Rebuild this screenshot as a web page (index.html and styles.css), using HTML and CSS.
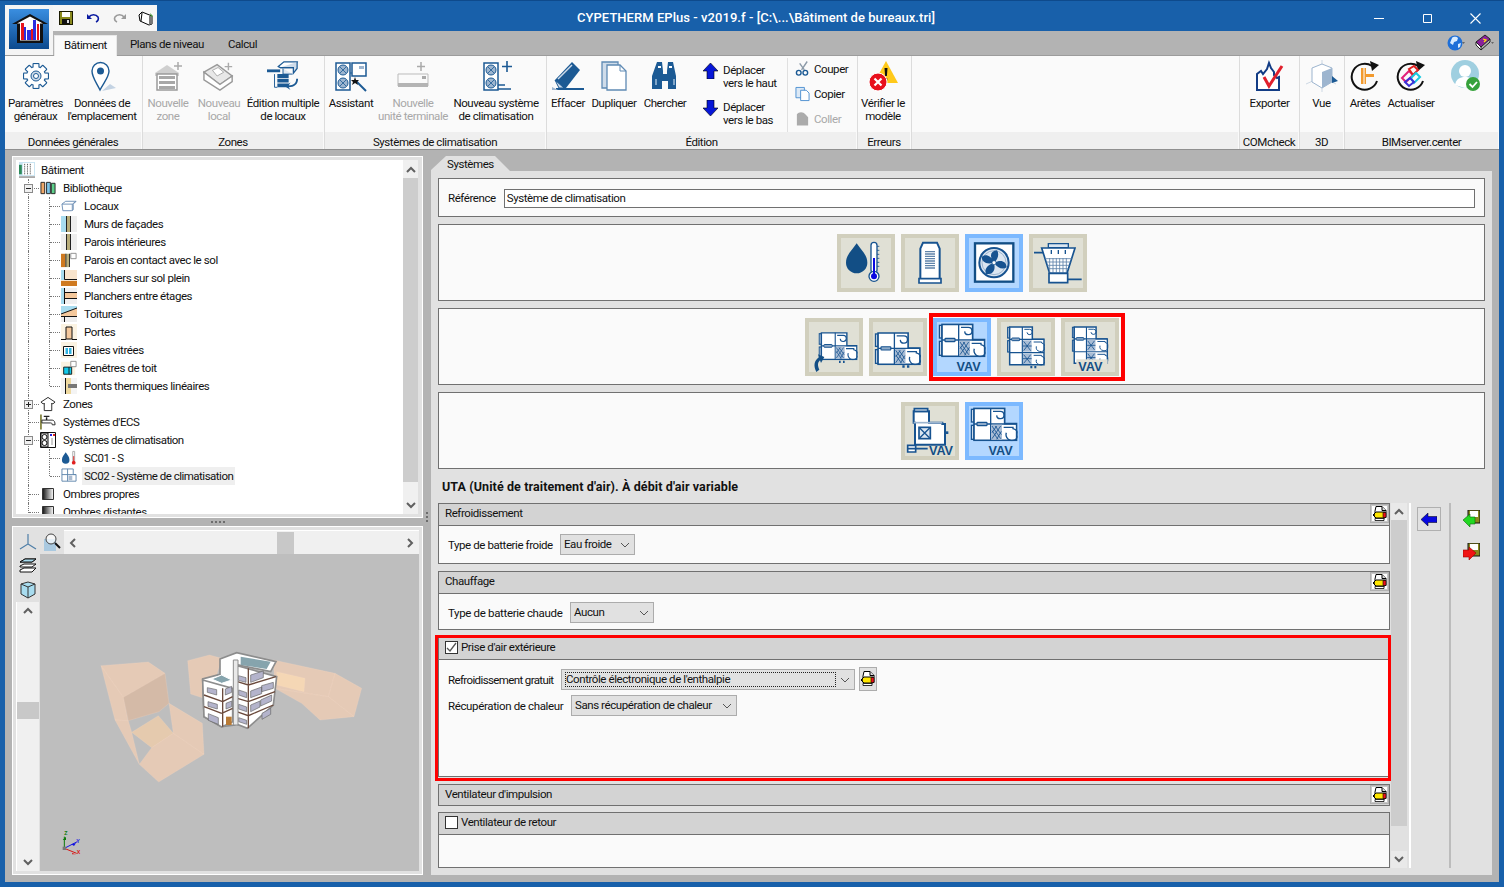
FILE: index.html
```html
<!DOCTYPE html>
<html lang="fr">
<head>
<meta charset="utf-8">
<title>CYPETHERM EPlus</title>
<link rel="stylesheet" href="styles.css">
</head>
<body>
<svg class="defs" width="0" height="0" aria-hidden="true">
  <symbol id="disk" viewBox="0 0 14 14"><path d="M0 0h14v14H0z" fill="#1a1a00"/><path d="M1 1h12v12H1z" fill="#8a8a1e"/><path d="M3 1h8v5H3z" fill="#fff"/><path d="M3 8h8v5H3z" fill="#111"/><path d="M8 9h2v3H8z" fill="#ddd"/></symbol>
  <symbol id="pencil" viewBox="0 0 16 16"><path d="M4 .5h6l4 4v7H3V5z" fill="#fff" stroke="#000"/><path d="M10 .5v4h4" fill="#ddd" stroke="#000"/><path d="M1 9l3-3h9v6H4z" fill="#ffe600" stroke="#000"/><path d="M11 6.500h3v5h-3z" fill="#e8141c" stroke="#000" stroke-width=".6"/><path d="M3 12.500h9v2H3z" fill="#fff" stroke="#000" stroke-width=".8"/><path d="M1 9l2-1v2z" fill="#000"/></symbol>
  <symbol id="chev" viewBox="0 0 10 6"><path d="M1 1l4 4 4-4" fill="none" stroke="#555" stroke-width="1"/></symbol>
  <symbol id="sb-up" viewBox="0 0 10 7"><path d="M1 6l4-4 4 4" fill="none" stroke="#606060" stroke-width="2"/></symbol>
  <symbol id="sb-down" viewBox="0 0 10 7"><path d="M1 1l4 4 4-4" fill="none" stroke="#606060" stroke-width="2"/></symbol>
  <symbol id="sb-left" viewBox="0 0 7 10"><path d="M6 1L2 5l4 4" fill="none" stroke="#606060" stroke-width="2"/></symbol>
  <symbol id="sb-right" viewBox="0 0 7 10"><path d="M1 1l4 4-4 4" fill="none" stroke="#606060" stroke-width="2"/></symbol>

  <symbol id="ahu" viewBox="0 0 142 102">
    <g fill="#fff" stroke="#175390" stroke-width="5">
      <rect x="3" y="6" width="8" height="38" fill="#cfdcea" stroke-width="4"/>
      <rect x="3" y="54" width="8" height="42" fill="#cfdcea" stroke-width="4"/>
      <path d="M11 3h92v46h36v50H11z"/>
      <path d="M61 3v96M11 50h128" stroke-width="4"/>
      <rect x="20" y="45" width="30" height="10" rx="2" fill="#8fabc9" stroke-width="3.500"/>
      <path d="M68 12h22a11 11 0 1 1-11 12" fill="none" stroke-width="4"/>
      <rect x="63" y="52" width="32" height="45" fill="#a9bdd5" stroke="none"/>
      <path d="M65 56l26 38M65 70l18 26M75 56l18 26M91 56L65 94M79 56L65 76M93 72L79 96" stroke="#175390" stroke-width="2.500" fill="none"/>
      <path d="M100 60h28v4a18 18 0 1 1-20 12" fill="none" stroke-width="4"/>
    </g>
  </symbol>
  <symbol id="ahu3" viewBox="0 0 114 120">
    <g fill="#fff" stroke="#175390" stroke-width="4.500">
      <rect x="2" y="4" width="6" height="32" fill="#cfdcea" stroke-width="3.500"/>
      <rect x="2" y="44" width="6" height="34" fill="#cfdcea" stroke-width="3.500"/>
      <path d="M8 3h68v37h35v76H8z"/>
      <path d="M46 3v113M8 40h103M8 80h103" stroke-width="3.500"/>
      <rect x="14" y="36" width="24" height="8" rx="2" fill="#8fabc9" stroke-width="3"/>
      <path d="M52 10h16a8 8 0 1 1-8 9" fill="none" stroke-width="3"/>
      <rect x="48" y="43" width="26" height="34" fill="#a9bdd5" stroke="none"/>
      <path d="M50 46l21 28M71 46L50 74M48 60h26" stroke-width="2.500" fill="none"/>
      <path d="M80 48h24v3a13 13 0 1 1-16 10" fill="none" stroke-width="3"/>
      <rect x="48" y="83" width="26" height="31" fill="#a9bdd5" stroke="none"/>
      <path d="M50 86l21 26M71 86L50 112M48 98h26" stroke-width="2.500" fill="none"/>
      <path d="M80 88h24v3a13 13 0 1 1-16 10" fill="none" stroke-width="3"/>
    </g>
  </symbol>
</svg>

<div class="window">
  <button class="app" aria-label="Application">
    <svg class="app-logo" viewBox="0 0 40 40">
      <defs><linearGradient id="lg" x1="0" y1="0" x2="0" y2="1"><stop offset="0" stop-color="#3a8ee0"/><stop offset="1" stop-color="#0c4a8e"/></linearGradient></defs>
      <rect width="40" height="40" fill="url(#lg)"/>
      <path d="M21 5L3 15h5v19h26V15h5z" fill="#111"/>
      <path d="M21 7.500L8 14.500h3v17h20v-17h3z" fill="#fff"/>
      <path d="M12 14h3v17h-3zM22 20h2v11h-2zM28 15h2v16h-2z" fill="#e8141c"/>
      <path d="M15 18h2v13h-2zM18 21h4v10h-4zM24 11h3v20h-3z" fill="#2d2de0"/>
    </svg>
  </button>

  <header class="titlebar">
    <div class="qat">
      <svg class="qi"><use href="#disk"/></svg>
      <svg class="qi" viewBox="0 0 14 14"><path d="M3 6c2-3 7-3 9 0 1 2 0 4-2 5" fill="none" stroke="#0a1aa0" stroke-width="1.600"/><path d="M1 3v5h5z" fill="#0a1aa0"/></svg>
      <svg class="qi" viewBox="0 0 14 14"><path d="M11 6C9 3 4 3 2 6c-1 2 0 4 2 5" fill="none" stroke="#9a9a9a" stroke-width="1.600"/><path d="M13 3v5H8z" fill="#9a9a9a"/></svg>
      <svg class="qi qi-cam" viewBox="0 0 17 15"><path d="M1 4l3-3 10 4v8l-3 1-9-4z" fill="#fff" stroke="#000"/><path d="M11 5l3 0 0 8-3 1z" fill="#777"/><path d="M12 2l3 3-2 1z" fill="#4a9a3a"/><path d="M4 2l-1 8" stroke="#000"/></svg>
    </div>
    <div class="title">CYPETHERM EPlus - v2019.f - [C:\...\Bâtiment de bureaux.tri]</div>
    <div class="winctl">
      <span class="wbtn"><svg width="11" height="11" viewBox="0 0 11 11"><path d="M0 5.500h10" stroke="#fff"/></svg></span>
      <span class="wbtn"><svg width="11" height="11" viewBox="0 0 11 11"><path d="M1.500 1.500h8v8h-8z" fill="none" stroke="#fff"/></svg></span>
      <span class="wbtn"><svg width="11" height="11" viewBox="0 0 11 11"><path d="M.5.500l10 10M10.500.500l-10 10" stroke="#fff" stroke-width="1.100"/></svg></span>
    </div>
  </header>

  <nav class="tabsbar">
    <span class="rtab rtab-on">Bâtiment</span>
    <span class="rtab rtab-plans">Plans de niveau</span>
    <span class="rtab rtab-calc">Calcul</span>
    <span class="tabs-right">
      <svg class="ti" viewBox="0 0 18 18"><circle cx="8" cy="9" r="7.500" fill="#1e6fd8"/><path d="M5 4c2-2 5-1 6 0l-1 3-3 1-1 3-3-2zM11 10l3-1-1 4-2 1z" fill="#d9ecff"/><path d="M15 8h3l-1.500 2z" fill="#666"/></svg>
      <svg class="ti ti-book" viewBox="0 0 19 18"><path d="M1 8l9-7 5 4-9 8z" fill="#8a1f9a" stroke="#222"/><path d="M1 8l5 5v3L1 11z" fill="#fff" stroke="#222"/><path d="M6 16l9-8V5" fill="none" stroke="#222"/><path d="M8 5l3 1-2 2" fill="none" stroke="#ffe600" stroke-width="1.300"/><path d="M16 8h3l-1.500 2z" fill="#666"/></svg>
    </span>
  </nav>

  <section class="ribbon">
    <div class="grp g1">
      <div class="gbody">
        <div class="rb b61"><svg class="ri" viewBox="-16 -16 32 32"><g fill="#1c5a94"><rect x="-3.500" y="-13" width="7" height="26" rx="1"/><rect x="-3.500" y="-13" width="7" height="26" rx="1" transform="rotate(45)"/><rect x="-3.500" y="-13" width="7" height="26" rx="1" transform="rotate(90)"/><rect x="-3.500" y="-13" width="7" height="26" rx="1" transform="rotate(135)"/><circle r="10"/></g><g fill="#fff"><rect x="-2.400" y="-11.900" width="4.800" height="23.800"/><rect x="-2.400" y="-11.900" width="4.800" height="23.800" transform="rotate(45)"/><rect x="-2.400" y="-11.900" width="4.800" height="23.800" transform="rotate(90)"/><rect x="-2.400" y="-11.900" width="4.800" height="23.800" transform="rotate(135)"/><circle r="8.900"/></g><circle r="5" fill="#cfdcea" stroke="#1c5a94"/><circle r="2.500" fill="#fff" stroke="#1c5a94"/></svg><span class="lb">Paramètres<br>généraux</span></div>
        <div class="rb b72"><svg class="ri" viewBox="0 0 32 32"><path d="M16 31l14-3-6-4z" fill="#c4d3e3"/><path d="M14 30C10 22 6 17 6 11a8.500 8.500 0 0 1 17 0c0 6-5 11-9 19z" fill="#fff" stroke="#1c5a94" stroke-width="1.400"/><circle cx="14.500" cy="11" r="3.500" fill="#1c5a94"/></svg><span class="lb">Données de<br>l'emplacement</span></div>
      </div>
      <div class="gfoot">Données générales</div>
    </div>
    <div class="grp g2">
      <div class="gbody">
        <div class="rb b50 off"><svg class="ri" viewBox="0 0 32 32"><path d="M26 2v8M22 6h8" stroke="#aaa" stroke-width="1.500"/><path d="M3 13L15 5l12 8v3H3z" fill="#cfcfcf"/><path d="M5 14h20v16H5z" fill="#fff" stroke="#9a9a9a" stroke-width="1.500"/><path d="M7 16h16v3H7zM7 21h16v3H7zM7 26h16v3H7z" fill="#a8a8a8"/></svg><span class="lb">Nouvelle<br>zone</span></div>
        <div class="rb b52 off"><svg class="ri" viewBox="0 0 34 32"><path d="M27 2v8M23 6h8" stroke="#aaa" stroke-width="1.500"/><path d="M1 12L15 4l16 12-13 9z" fill="#e8e8e8" stroke="#999" stroke-width="1.500"/><path d="M1 12v8l17 11 13-9v-6l-13 9z" fill="#fff" stroke="#999" stroke-width="1.500"/><path d="M10 10l6-3 6 5-7 4z" fill="#fff" stroke="#aaa"/></svg><span class="lb">Nouveau<br>local</span></div>
        <div class="rb b76"><svg class="ri" viewBox="0 0 34 32"><path d="M12 6l6-5h14l-4 6H14z" fill="#fff" stroke="#1c5a94" stroke-width="1.300"/><path d="M14 7h14v6l4-5V1" fill="#cfdcea" stroke="#1c5a94" stroke-width="1.300"/><path d="M17 8v6h10" fill="#dfe8f1" stroke="#1c5a94"/><path d="M0 9h14v3H0z" fill="#1c5a94"/><path d="M8 14v14h3" fill="none" stroke="#1c5a94"/><path d="M11 14h12v4H11zM11 19h12v4H11zM11 24h12v4H11z" fill="#1c5a94"/><path d="M31 19c0 5-3 7-8 7l2-3-6 4 6 4-2-3c6 0 10-3 10-9z" fill="#1c5a94"/></svg><span class="lb">Édition multiple<br>de locaux</span></div>
      </div>
      <div class="gfoot">Zones</div>
    </div>
    <div class="grp g3">
      <div class="gbody">
        <div class="rb b52"><svg class="ri" viewBox="0 0 32 32"><path d="M1 3h14v27H1z" fill="#fff" stroke="#1c5a94" stroke-width="1.500"/><circle cx="8" cy="10" r="5" fill="#9db5cf" stroke="#1c5a94"/><circle cx="8" cy="23" r="5" fill="#9db5cf" stroke="#1c5a94"/><path d="M5 7l6 6M11 7l-6 6M5 20l6 6M11 20l-6 6" stroke="#1c5a94" stroke-width=".8"/><path d="M17 3h14v13H17z" fill="#fff" stroke="#1c5a94" stroke-width="1.500"/><path d="M24 6h5v3h-5z" fill="#9db5cf"/><path d="M15 13h2" stroke="#1c5a94"/><path d="M21 21l10 10" stroke="#1c5a94" stroke-width="2"/><path d="M20 17l1 3 3 0-2 2 1 3-3-2-3 2 1-3-2-2 3 0z" fill="#111"/></svg><span class="lb">Assistant</span></div>
        <div class="rb b72 off"><svg class="ri ri-w" viewBox="0 0 32 32"><path d="M24 2v9M20 6.500h8" stroke="#aaa" stroke-width="1.500"/><path d="M1 14h30v12H1z" fill="#fafafa" stroke="#bbb"/><path d="M1 23h30v4H1z" fill="#b4b4b4"/><path d="M25 16h4v3h-4z" fill="#aaa"/></svg><span class="lb">Nouvelle<br>unité terminale</span></div>
        <div class="rb b94"><svg class="ri" viewBox="0 0 32 32"><path d="M4 3h14v27H4z" fill="#fff" stroke="#1c5a94" stroke-width="1.500"/><circle cx="11" cy="10" r="5" fill="#9db5cf" stroke="#1c5a94"/><circle cx="11" cy="23" r="5" fill="#9db5cf" stroke="#1c5a94"/><path d="M8 7l6 6M14 7l-6 6M8 20l6 6M14 20l-6 6" stroke="#1c5a94" stroke-width=".8"/><path d="M27 1v11M22 6.500h11" stroke="#1c5a94" stroke-width="1.600"/><path d="M18 25h7M18 29h13" stroke="#1c5a94" stroke-width="1.600"/></svg><span class="lb">Nouveau système<br>de climatisation</span></div>
      </div>
      <div class="gfoot">Systèmes de climatisation</div>
    </div>
    <div class="grp g4">
      <div class="gbody">
        <div class="rb b42"><svg class="ri" viewBox="0 0 32 32"><path d="M4 28h28v2H4z" fill="#1c5a94"/><path d="M3 20L20 2l8 8-14 18H8z" fill="#1c5a94"/><path d="M3 20l9 8H7z" fill="#cfdcea" stroke="#1c5a94"/><path d="M6 19L20 5" stroke="#cfdcea" stroke-width="1.500"/><path d="M0 27l6 3H0z" fill="#9db5cf"/></svg><span class="lb">Effacer</span></div>
        <div class="rb b50"><svg class="ri" viewBox="0 0 30 32"><path d="M3 2h16v26H3z" fill="#cfdcea" stroke="#5f8ab4" stroke-width="1.300"/><path d="M8 5h13l6 6v19H8z" fill="#fff" stroke="#5f8ab4" stroke-width="1.300"/><path d="M21 5v6h6" fill="none" stroke="#5f8ab4"/></svg><span class="lb">Dupliquer</span></div>
        <div class="rb b52"><svg class="ri" viewBox="0 0 32 32"><path d="M8 2h5l1 9v3h4v-3l1-9h5l3 14v13H19v-8h-6v8H3V16z" fill="#1c5a94"/><path d="M9 7h3M20 7h3" stroke="#fff" stroke-width="2"/><path d="M7 19v6M25 19v6" stroke="#7fa5c9" stroke-width="2"/></svg><span class="lb">Chercher</span></div>
        <div class="move">
          <div class="mv"><svg class="ms" viewBox="0 0 15 16"><path d="M7.500 0L15 8h-4v8H4V8H0z" fill="#0616d8" stroke="#000" stroke-width=".6"/></svg><span class="lb">Déplacer<br>vers le haut</span></div>
          <div class="mv"><svg class="ms" viewBox="0 0 15 16"><path d="M7.500 16L15 8h-4V0H4v8H0z" fill="#0616d8" stroke="#000" stroke-width=".6"/></svg><span class="lb">Déplacer<br>vers le bas</span></div>
        </div>
        <div class="clip">
          <div class="cl"><svg class="cs" viewBox="0 0 16 16"><path d="M13 0L7 9M5 2l5 7" stroke="#8c9aa8" stroke-width="1.500"/><circle cx="4" cy="12" r="2.500" fill="none" stroke="#1c5a94" stroke-width="1.500"/><circle cx="11" cy="12" r="2.500" fill="none" stroke="#1c5a94" stroke-width="1.500"/></svg>Couper</div>
          <div class="cl"><svg class="cs" viewBox="0 0 16 16"><path d="M1 1h9v11H1z" fill="#dce9f6" stroke="#4d8fd0"/><path d="M6 4h6l3 3v8H6z" fill="#fff" stroke="#4d8fd0"/></svg>Copier</div>
          <div class="cl off"><svg class="cs" viewBox="0 0 16 16"><path d="M2 3c2-3 7-3 9 0l3 3v9H2z" fill="#ababab"/></svg>Coller</div>
        </div>
      </div>
      <div class="gfoot">Édition</div>
    </div>
    <div class="grp g5">
      <div class="gbody">
        <div class="rb b50"><svg class="ri" viewBox="0 0 32 32"><path d="M19 1l12 22H7z" fill="#ffc91a"/><path d="M17.500 8h3l-.6 8h-1.800zM17.800 18h2.400v2.500h-2.400z" fill="#111"/><circle cx="11" cy="22" r="9" fill="#e8101c" stroke="#fff"/><path d="M7.500 18.500l7 7M14.500 18.500l-7 7" stroke="#fff" stroke-width="2.200"/></svg><span class="lb">Vérifier le<br>modèle</span></div>
      </div>
      <div class="gfoot">Erreurs</div>
    </div>
    <div class="grp g6"><div class="gbody"></div><div class="gfoot"></div></div>
    <div class="grp g7">
      <div class="gbody">
        <div class="rb b60"><svg class="ri" viewBox="0 0 32 32"><path d="M3 30V14l4-3 2 3 4-5 2-6 2 5 3 4v3l3 3 2-1v13z" fill="#fff" stroke="#123c85" stroke-width="2"/><path d="M10 17l5 9 13-20" fill="none" stroke="#e0202c" stroke-width="3"/></svg><span class="lb">Exporter</span></div>
      </div>
      <div class="gfoot">COMcheck</div>
    </div>
    <div class="grp g8">
      <div class="gbody">
        <div class="rb b43"><svg class="ri" viewBox="0 0 32 32"><path d="M16 0v8M0 24l9-4M30 24l-8-4M16 28v4" stroke="#cdd8e4"/><path d="M6 8l10-4 10 4v14l-10 6-10-6z" fill="#fff" stroke="#9db5cf"/><path d="M16 12l10-4v14l-10 6z" fill="#9db5cf"/><path d="M26 16l6 5-6 2z" fill="#1c5a94"/></svg><span class="lb">Vue</span></div>
      </div>
      <div class="gfoot">3D</div>
    </div>
    <div class="grp g9">
      <div class="gbody">
        <div class="rb b40"><svg class="ri" viewBox="0 0 32 32"><path d="M23 6a13 13 0 1 0 5 15" fill="none" stroke="#111" stroke-width="2"/><path d="M21 1l9 4-7 6z" fill="#111"/><path d="M12 8h5v6h8v3h-8v7h-5z" fill="#f29a2e"/><path d="M15 8v16" stroke="#fff"/></svg><span class="lb">Arêtes</span></div>
        <div class="rb b52"><svg class="ri" viewBox="0 0 32 32"><path d="M23 6a13 13 0 1 0 5 15" fill="none" stroke="#111" stroke-width="2"/><path d="M21 1l9 4-7 6z" fill="#111"/><path d="M7 18l7-7 4 4-7 7z" fill="none" stroke="#e0207a" stroke-width="2"/><path d="M14 9l5-3 4 4-5 5z" fill="none" stroke="#e02020" stroke-width="2"/><path d="M16 18l5-5 4 4-6 6z" fill="none" stroke="#18c8e0" stroke-width="2"/><path d="M10 22l5-4 4 4-5 4z" fill="none" stroke="#3a30d8" stroke-width="2"/></svg><span class="lb">Actualiser</span></div>
        <div class="rb b58"><svg class="ri" viewBox="0 0 32 32"><circle cx="15" cy="14" r="14" fill="#9fcfe0"/><circle cx="15" cy="11" r="6" fill="#fff"/><path d="M5 25c1-6 5-8 10-8s9 2 10 8l-10 3z" fill="#fff"/><circle cx="23" cy="24" r="7" fill="#37a23c"/><path d="M19.500 24l3 3 4.500-5" fill="none" stroke="#fff" stroke-width="1.800"/></svg></div>
      </div>
      <div class="gfoot">BIMserver.center</div>
    </div>
  </section>

  <main class="workspace">
    <aside class="leftcol">
      <div class="tree">
        <div class="tree-list">
          <div class="row r0"><svg class="ti16" viewBox="0 0 17 17"><rect width="17" height="15" fill="#c8e4f2"/><path d="M0 15h17v2H0z" fill="#aaa"/><path d="M0 3h3v10H0z" fill="#2c8a5a"/><path d="M4 1h12v13H4z" fill="#fff"/><path d="M6 2v11M9 2v11M12 2v11" stroke="#333" stroke-dasharray="1 1"/></svg><span class="tx">Bâtiment</span></div>
          <div class="row"><span class="c c-t"><i class="exp minus"></i></span><svg class="ti16" viewBox="0 0 17 14"><path d="M1 1h4v12H1z" fill="#f0a868" stroke="#222"/><path d="M7 1h4v12H7z" fill="#7cc4e8" stroke="#222"/><path d="M12 2h4v11h-4z" fill="#5cd08a" stroke="#222"/></svg><span class="tx">Bibliothèque</span></div>
          <div class="row"><span class="c c-v"></span><span class="c c-t"></span><svg class="ti16" viewBox="0 0 17 12"><path d="M1 4l4-3h11l-3 3v6l-2 1H2z" fill="#fff" stroke="#6d8fb5"/><path d="M1 4h11v7M12 4l4-3" fill="none" stroke="#6d8fb5"/></svg><span class="tx">Locaux</span></div>
          <div class="row"><span class="c c-v"></span><span class="c c-t"></span><svg class="ti16" viewBox="0 0 16 16"><path d="M0 0h16v16H0z" fill="#eee"/><path d="M0 0h5v16H0z" fill="#a8dcef"/><path d="M5 0h5v16H5z" fill="#b8ad7a"/><path d="M5 0h1v16H5zM9 0h1v16H9z" fill="#222"/></svg><span class="tx">Murs de façades</span></div>
          <div class="row"><span class="c c-v"></span><span class="c c-t"></span><svg class="ti16" viewBox="0 0 16 16"><path d="M0 0h16v16H0z" fill="#eee"/><path d="M5 0h5v16H5z" fill="#b8ad7a"/><path d="M5 0h1v16H5zM9 0h1v16H9z" fill="#222"/></svg><span class="tx">Parois intérieures</span></div>
          <div class="row"><span class="c c-v"></span><span class="c c-t"></span><svg class="ti16" viewBox="0 0 18 16"><path d="M0 1h5v15H0z" fill="#cf7a20"/><path d="M5 1h5v15H5z" fill="#b8ad7a"/><path d="M5 1h1v15H5zM9 1h1v15H9z" fill="#222"/><path d="M11 .5h6v6h-6z" fill="#fff" stroke="#888"/></svg><span class="tx">Parois en contact avec le sol</span></div>
          <div class="row"><span class="c c-v"></span><span class="c c-t"></span><svg class="ti16" viewBox="0 0 16 16"><path d="M0 0h16v16H0z" fill="#f8e4cc"/><path d="M0 0h3v10H0z" fill="#a8dcef"/><path d="M0 11h16v5H0z" fill="#cf7a20"/><path d="M3.500 0v9.500H16" fill="none" stroke="#111"/></svg><span class="tx">Planchers sur sol plein</span></div>
          <div class="row"><span class="c c-v"></span><span class="c c-t"></span><svg class="ti16" viewBox="0 0 16 16"><path d="M0 0h16v16H0z" fill="#f0f0f0"/><path d="M0 0h3v16H0z" fill="#a8dcef"/><path d="M4 5h12v5H4z" fill="#f4c89c"/><path d="M3.500 0v16M4 4.500h12M4 10.500h12" stroke="#111"/></svg><span class="tx">Planchers entre étages</span></div>
          <div class="row"><span class="c c-v"></span><span class="c c-t"></span><svg class="ti16" viewBox="0 0 16 16"><path d="M0 0h16v16H0z" fill="#a8dcef"/><path d="M0 10h16v6H0z" fill="#eee"/><path d="M0 8L16 2v8H0z" fill="#f4c89c"/><path d="M0 8L16 2M0 10.500h16M3.500 10v6" stroke="#111" fill="none"/></svg><span class="tx">Toitures</span></div>
          <div class="row"><span class="c c-v"></span><span class="c c-t"></span><svg class="ti16" viewBox="0 0 16 16"><path d="M0 0h16v16H0z" fill="#fbf3e2"/><path d="M5 3h6v12H5z" fill="#f4c89c" stroke="#111"/><path d="M0 15.500h5M11 15.500h5" stroke="#111"/></svg><span class="tx">Portes</span></div>
          <div class="row"><span class="c c-v"></span><span class="c c-t"></span><svg class="ti16" viewBox="0 0 16 16"><path d="M0 0h16v16H0z" fill="#fbf3e2"/><path d="M2.500 4.500h10v9h-10z" fill="#fff" stroke="#111"/><path d="M4.500 6h2.500v6H4.500zM8 6h2.500v6H8z" fill="#32b4e0"/></svg><span class="tx">Baies vitrées</span></div>
          <div class="row"><span class="c c-v"></span><span class="c c-t"></span><svg class="ti16" viewBox="0 0 18 16"><path d="M0 1h16v15H0z" fill="#fbf3e2"/><path d="M3 7h9v8H3z" fill="#12c8e8" stroke="#111"/><path d="M9 7v8" stroke="#111"/><path d="M11 .5h6v6h-6z" fill="#fff" stroke="#888"/></svg><span class="tx">Fenêtres de toit</span></div>
          <div class="row"><span class="c c-v"></span><span class="c c-l"></span><svg class="ti16" viewBox="0 0 16 16"><path d="M0 0h16v16H0z" fill="#f4f4f4"/><path d="M5 0h5v16H5z" fill="#eed9a0"/><path d="M4.500 0v16" stroke="#111"/><path d="M7 6h9v4H7z" fill="#777"/></svg><span class="tx">Ponts thermiques linéaires</span></div>
          <div class="row"><span class="c c-t"><i class="exp plus"></i></span><svg class="ti16" viewBox="0 0 17 16"><path d="M8.500 1L1 6l2.500 2 1-1v8h8V7l1 1L16 6z" fill="#fff" stroke="#222"/></svg><span class="tx">Zones</span></div>
          <div class="row"><span class="c c-t"></span><svg class="ti16" viewBox="0 0 17 16"><path d="M0 0h2v16H0z" fill="#8a8a4a"/><path d="M2 6h11c2 0 3 2 3 5H13c0-2-1-2-2-2H2z" fill="#fff" stroke="#222"/><path d="M7 3v3M4 2h6" stroke="#222" stroke-width="1.500"/></svg><span class="tx">Systèmes d'ECS</span></div>
          <div class="row"><span class="c c-t"><i class="exp minus"></i></span><svg class="ti16" viewBox="0 0 16 16"><path d="M.5.500h15v15H.5z" fill="#fff" stroke="#111"/><path d="M1 1h7v14H1z" fill="#ddd" stroke="#111"/><circle cx="4.500" cy="5" r="2.500" fill="#fff" stroke="#111"/><circle cx="4.500" cy="11" r="2.500" fill="#fff" stroke="#111"/><path d="M10 2h2v2h-2z" fill="#2020e0"/><path d="M13 2h2v2h-2z" fill="#e02020"/><path d="M12 6v7" stroke="#999"/></svg><span class="tx tx-tight">Systèmes de climatisation</span></div>
          <div class="row"><span class="c c-v"></span><span class="c c-t"></span><svg class="ti16" viewBox="0 0 17 16"><path d="M5 2c2 3 4 5 4 8a4 4 0 0 1-8 0c0-3 2-5 4-8z" fill="#1c5a94"/><path d="M12.500 1h2v10h-2z" fill="#fff" stroke="#aaa"/><circle cx="13.500" cy="13" r="2" fill="#e02020"/><path d="M13.500 6v6" stroke="#e02020"/></svg><span class="tx">SC01 - S</span></div>
          <div class="row"><span class="c c-v"></span><span class="c c-l"></span><svg class="ti16" viewBox="0 0 17 17"><path d="M1 1h12v6h3v7H1z" fill="#fff" stroke="#5f86ad"/><path d="M1 7h15M7 1v13" stroke="#5f86ad"/><path d="M8 8h4v5H8z" fill="#aabbd0"/></svg><span class="tx tx-sel">SC02 - Système de climatisation</span></div>
          <div class="row"><span class="c c-t"></span><svg class="ti16" viewBox="0 0 16 16"><defs><linearGradient id="ombre"><stop offset="0" stop-color="#111"/><stop offset="1" stop-color="#fff"/></linearGradient></defs><path d="M2.500 2.500h11v11h-11z" fill="url(#ombre)" stroke="#333"/></svg><span class="tx">Ombres propres</span></div>
          <div class="row"><span class="c c-t"></span><svg class="ti16" viewBox="0 0 16 16"><path d="M2.500 2.500h11v11h-11z" fill="url(#ombre)" stroke="#333"/></svg><span class="tx">Ombres distantes</span></div>
        </div>
        <div class="vscroll vscroll-tree">
          <span class="sb-arrow"><svg width="10" height="7"><use href="#sb-up"/></svg></span>
          <span class="sb-thumb"></span>
          <span class="sb-arrow"><svg width="10" height="7"><use href="#sb-down"/></svg></span>
        </div>
      </div>
      <div class="split-h"><span></span><span></span><span></span><span></span></div>
      <div class="view">
        <div class="view-grid">
          <div class="tool"><svg width="18" height="18" viewBox="0 0 18 18"><path d="M9 1v10L1 16M9 11l8 5" fill="none" stroke="#4f7fa8" stroke-width="1.200"/></svg></div>
          <div class="tool"><svg width="18" height="18" viewBox="0 0 18 18"><path d="M1 6h12v12H1z" fill="#a9c9e0"/><circle cx="8" cy="6" r="5" fill="#fff" fill-opacity=".7" stroke="#444"/><path d="M12 10l5 5" stroke="#111" stroke-width="2"/></svg></div>
          <div class="hscroll">
            <svg width="7" height="10"><use href="#sb-left"/></svg>
            <span class="hthumb"></span>
            <svg width="7" height="10"><use href="#sb-right"/></svg>
          </div>
          <div class="view-left">
            <div class="tool"><svg width="18" height="16" viewBox="0 0 18 16"><path d="M1 4l5-3h11l-4 3zM1 8l4-2h12l-4 3H1zM1 12l4-2h12l-4 4H1z" fill="#fff" stroke="#111"/><path d="M1 4l5-3h11l-4 3z" fill="#a8dcef" stroke="#111"/></svg></div>
            <div class="tool"><svg width="16" height="18" viewBox="0 0 16 18"><path d="M1 3l7-2 7 2v10l-7 4-7-4z" fill="#a8dcef" stroke="#333"/><path d="M1 3l7 3 7-3M8 6v11" fill="none" stroke="#333"/></svg></div>
            <div class="vscroll vscroll-view">
              <span class="sb-arrow"><svg width="10" height="7"><use href="#sb-up"/></svg></span>
              <span class="sb-track"><span class="sb-small"></span></span>
              <span class="sb-arrow"><svg width="10" height="7"><use href="#sb-down"/></svg></span>
            </div>
          </div>
          <div class="canvas">
            <svg class="scene" viewBox="120 87 1137 951">
              <g fill="#ffd2b0" fill-opacity=".6" stroke="#fadcc6" stroke-opacity=".6">
                <path d="M303 422L445 411 495 445 370 517z"/>
                <path d="M303 422L370 517 384 587 345 585z"/>
                <path d="M370 517L495 445 507 535 477 560 385 587z" fill="#e3b898"/>
                <path d="M345 585L385 587 395 622 418 718z"/>
                <path d="M395 622L475 572 520 625 455 668z" fill="#ffd2a4"/>
                <path d="M507 535L607 595 612 688 520 625z"/>
                <path d="M418 718L455 668 520 625 612 688 476 771z"/>
                <path d="M563 407L628 390 665 400 650 450 610 460 612 520 572 507z"/>
                <path d="M820 405L1005 445 985 515 825 490z"/>
                <path d="M1005 445L1085 490 1062 575 985 515z"/>
                <path d="M825 490L985 515 1062 575 960 585 905 535z"/>
                <path d="M830 440L915 460 912 500 830 480z" fill="#ffe0b4"/>
              </g>
              <path d="M660 402L710 383 828 410 812 440 716 420 704 600 665 605 612 575 608 462 660 448z" fill="#fff" stroke="#8d8d8d" stroke-width="5"/>
              <path d="M722 395L812 410 800 432 722 420z" fill="#86a4ad"/>
              <path d="M635 462L665 450 695 465 665 475z" fill="#86a4ad" stroke="#fff" stroke-width="3"/>
              <path d="M712 422L830 455 820 540 742 610 704 595z" fill="#fff" stroke="#8d8d8d" stroke-width="5"/>
              <path d="M608 465L698 490 698 590 665 606 612 575z" fill="#fff" stroke="#8d8d8d" stroke-width="5"/>
              <path d="M612 510L668 530M612 545L665 565M668 490V605M668 530L698 515M665 565L698 550M712 470L745 480 828 455M712 520L745 530 825 500M710 560L745 572 820 540M745 430V610" stroke="#6b4a3c" stroke-width="4" fill="none"/>
              <path d="M622 488L650 494V510L622 502zM624 530L652 538V552L624 544zM625 566L655 578V598L625 586zM715 452L738 458V472L715 466zM752 450L790 438V458L752 472zM716 495L740 503V518L716 510zM752 498L785 486V506L752 518zM716 538L740 546V560L716 552zM752 540L780 528V546L752 560zM716 578L740 586V598L716 590zM785 482L820 472V490L785 500zM782 525L815 510V528L782 543zM786 565L812 550V568L786 583zM676 492L695 484V502L676 510zM678 535L695 528V545L678 552z" fill="#b4b4cc" stroke="#666" stroke-width="2"/>
              <path d="M678 575H695V600H678z" fill="#b87a35"/>
              <path d="M700 405H714V600H700z" fill="#e9e9e9" stroke="#8d8d8d" stroke-width="3"/>
              <g fill="none" stroke-width="3">
                <path d="M193 970V935" stroke="#0a7a0a"/>
                <path d="M193 970L232 950" stroke="#1414e0"/>
                <path d="M193 970L230 985" stroke="#d81414"/>
              </g>
              <path d="M188 945h10v-10z" fill="#0a7a0a"/><path d="M214 958l14-4-6 9z" fill="#1414e0"/><path d="M216 984l12 4-12 0z" fill="#d81414"/>
              <rect x="188" y="965" width="10" height="10" fill="#777"/>
              <text x="193" y="931" class="axis ax-z">Z</text>
              <text x="229" y="953" class="axis ax-y">Y</text>
              <text x="230" y="987" class="axis ax-x">X</text>
            </svg>
          </div>
        </div>
      </div>
    </aside>

    <div class="split-v"><span></span><span></span><span></span></div>

    <div class="rightcol">
      <div class="tabstrip"><span class="ptab">Systèmes</span></div>
      <div class="panel">
        <div class="box refbox"><span>Référence</span><div class="input">Système de climatisation</div></div>
        <div class="box iconbox">
          <div class="ib"><svg viewBox="0 0 150 150"><path d="M47 16C60 36 79 50 79 74a32 32 0 0 1-64 0C15 50 34 36 47 16z" fill="#124e85"/><rect x="90" y="13" width="18" height="92" rx="9" fill="#fff" stroke="#175390" stroke-width="4"/><circle cx="99" cy="115" r="15" fill="#fff" stroke="#175390" stroke-width="4"/><circle cx="99" cy="115" r="9" fill="#0808e0"/><path d="M99 60v50" stroke="#0808e0" stroke-width="6"/><path d="M108 25h7M108 37h7M108 49h7M108 61h7M108 73h7M108 85h7" stroke="#175390" stroke-width="2.500"/></svg></div>
          <div class="ib"><svg viewBox="0 0 150 150"><path d="M46 128V32l8-18h42l8 18v96" fill="#fff" stroke="#175390" stroke-width="6"/><path d="M60 41h30M60 48h30M60 55h30M60 62h30M60 69h30M60 76h30M60 83h30M60 90h30" stroke="#5f83a9" stroke-width="4"/><path d="M42 122h66v13H42z" fill="#fff" stroke="#175390" stroke-width="5"/></svg></div>
          <div class="ib on"><svg viewBox="0 0 150 150"><rect x="18" y="16" width="115" height="115" fill="#fff" stroke="#124e85" stroke-width="7"/><circle cx="75" cy="74" r="44" fill="#dbe6f1" stroke="#175390" stroke-width="6"/><circle cx="75" cy="74" r="36" fill="none" stroke="#9db5cf" stroke-width="3"/><path d="M75 74C60 54 64 39 84 37c8 12 2 28-9 37zM75 74c22-10 36-4 38 14-12 8-28 2-38-14zM75 74c6 24-4 36-24 34-6-14 4-28 24-34zM75 74C52 81 38 71 38 57c10-10 28-6 37 17z" fill="#175390"/><circle cx="75" cy="74" r="6" fill="#fff" stroke="#175390" stroke-width="2"/></svg></div>
          <div class="ib"><svg viewBox="0 0 150 150"><path d="M3 44h32M100 124h46" stroke="#175390" stroke-width="5"/><path d="M46 17h60v12H46z" fill="#dbe6f1" stroke="#175390" stroke-width="4"/><path d="M26 30h100l-24 76H50z" fill="#fff" stroke="#175390" stroke-width="5"/><path d="M36 62h80M40 72h72M43 82h66M46 92h60M50 60v44M60 60v44M70 60v44M80 60v44M90 60v44M100 60v44" stroke="#5f83a9" stroke-width="2.500"/><path d="M55 36v12M76 36v12M97 36v12" stroke="#175390" stroke-width="4"/><path d="M48 106h56v28H48z" fill="#fff" stroke="#175390" stroke-width="5"/></svg></div>
        </div>
        <div class="box iconbox">
          <div class="ib"><svg viewBox="0 0 150 150"><use href="#ahu" x="28" y="30" width="118" height="85"/><path d="M22 150c-10-20-6-34 8-44l-3-9 19 8-10 18-3-8c-7 7-8 15-2 28z" fill="#124e85"/><path d="M90 116h5v7h-5zM102 116h5v7h-5z" fill="#175390"/></svg></div>
          <div class="ib"><svg viewBox="0 0 150 150"><use href="#ahu" x="4" y="30" width="140" height="100"/><path d="M88 130h7v7h-7zM102 130h7v7h-7z" fill="#175390"/></svg></div>
          <div class="ib on"><svg viewBox="0 0 150 150"><use href="#ahu" x="4" y="4" width="142" height="102"/><text x="95" y="147" class="vav">VAV</text></svg></div>
          <div class="ib"><svg viewBox="0 0 150 150"><use href="#ahu3" x="18" y="12" width="114" height="120"/><path d="M88 132h6v7h-6zM100 132h6v7h-6z" fill="#175390"/></svg></div>
          <div class="ib"><svg viewBox="0 0 150 150"><use href="#ahu3" x="20" y="12" width="110" height="116"/><rect x="34" y="112" width="94" height="38" fill="#e0e0d5"/><text x="76" y="147" class="vav">VAV</text></svg></div>
        </div>
        <div class="box iconbox">
          <div class="ib"><svg viewBox="0 0 150 150"><path d="M26 50V16h46v34h40v4h8v62H30V50z" fill="#fff" stroke="#175390" stroke-width="6"/><path d="M26 50h86" stroke="#9db5cf" stroke-width="5"/><path d="M28 16h40v-8H28z" fill="#fff" stroke="#175390" stroke-width="5"/><path d="M120 76h10v8h-10z" fill="#175390"/><rect x="42" y="64" width="34" height="34" fill="#dbe6f1" stroke="#175390" stroke-width="5"/><path d="M44 66l30 30M74 66L44 96" stroke="#175390" stroke-width="4"/><path d="M8 128h60M8 118h24v20H8z" fill="#fff" stroke="#175390" stroke-width="5"/><text x="108" y="147" class="vav">VAV</text></svg></div>
          <div class="ib on"><svg viewBox="0 0 150 150"><use href="#ahu" x="4" y="4" width="142" height="102"/><text x="95" y="147" class="vav">VAV</text></svg></div>
        </div>
        <h2 class="subtitle">UTA (Unité de traitement d'air). À débit d'air variable</h2>
        <div class="lower">
          <div class="accordion">
            <section class="sec s1">
              <div class="sec-h"><span class="sec-t">Refroidissement</span><span class="hbtn"><svg width="16" height="16"><use href="#pencil"/></svg></span></div>
              <div class="sec-b"><div class="frow"><span class="lab l105">Type de batterie froide</span><div class="sel w75">Eau froide<svg class="chev"><use href="#chev"/></svg></div></div></div>
            </section>
            <section class="sec s2">
              <div class="sec-h"><span class="sec-t">Chauffage</span><span class="hbtn"><svg width="16" height="16"><use href="#pencil"/></svg></span></div>
              <div class="sec-b"><div class="frow"><span class="lab l115">Type de batterie chaude</span><div class="sel w84">Aucun<svg class="chev"><use href="#chev"/></svg></div></div></div>
            </section>
            <section class="sec s3">
              <div class="sec-h"><label class="chk"><i class="box13"><svg width="11" height="11" viewBox="0 0 11 11"><path d="M1 6l3 3 6-8" fill="none" stroke="#555" stroke-width="1.300"/></svg></i>Prise d'air extérieure</label></div>
              <div class="sec-b">
                <div class="frow">
                  <span class="lab l106">Refroidissement gratuit</span>
                  <div class="sel w294"><em class="focus">Contrôle électronique de l'enthalpie</em><svg class="chev"><use href="#chev"/></svg></div>
                  <span class="fbtn"><svg width="16" height="16"><use href="#pencil"/></svg></span>
                </div>
                <div class="frow frow2"><span class="lab l116">Récupération de chaleur</span><div class="sel w166">Sans récupération de chaleur<svg class="chev"><use href="#chev"/></svg></div></div>
              </div>
            </section>
            <section class="sec s4">
              <div class="sec-h"><span class="sec-t">Ventilateur d'impulsion</span><span class="hbtn"><svg width="16" height="16"><use href="#pencil"/></svg></span></div>
            </section>
            <section class="sec s5">
              <div class="sec-h"><label class="chk"><i class="box13"></i>Ventilateur de retour</label></div>
              <div class="sec-b"></div>
            </section>
          </div>
          <div class="vscroll vscroll-acc">
            <span class="sb-arrow"><svg width="10" height="7"><use href="#sb-up"/></svg></span>
            <span class="sb-thumb"></span>
            <span class="sb-rest"></span>
            <span class="sb-arrow"><svg width="10" height="7"><use href="#sb-down"/></svg></span>
          </div>
          <div class="sidebtn">
            <span class="arrowbtn"><svg width="16" height="13" viewBox="0 0 16 13"><path d="M0 6.500L7 0v3.500h9v6H7V13z" fill="#0808e0" stroke="#000" stroke-width=".5"/></svg></span>
          </div>
          <div class="sidedisk">
            <svg class="dk" viewBox="0 0 17 17"><path d="M5 0h12v13H5z" fill="#8a8a1e" stroke="#111"/><path d="M7 1h8v6H7z" fill="#fff"/><path d="M0 10l7-6v3h5v7H7v3z" fill="#22d822" stroke="#0a6a0a" stroke-width=".6"/></svg>
            <svg class="dk" viewBox="0 0 17 17"><path d="M5 0h12v13H5z" fill="#8a8a1e" stroke="#111"/><path d="M7 1h8v6H7z" fill="#fff"/><path d="M13 10L6 4v3H0v7h6v3z" fill="#f01414" stroke="#900" stroke-width=".6"/></svg>
          </div>
        </div>
      </div>
    </div>
  </main>

  <div class="mark mark-icons"></div>
  <div class="mark mark-sec"></div>
</div>
</body>
</html>
```
FILE: styles.css
```css
* { box-sizing: border-box; }
html, body { margin: 0; padding: 0; }
body { width: 1504px; height: 887px; overflow: hidden; font: 11.5px/16px Roboto, "Liberation Sans", sans-serif; color: #111; letter-spacing: -.42px; }
.defs { position: absolute; }
svg { display: block; flex: none; }

.window { position: relative; width: 1504px; height: 887px; padding: 0 5px 5px; background: #1860aa; border-top: 1px solid #0e4a8c; display: flex; flex-direction: column; }

.app { position: absolute; z-index: 2; left: 5px; top: 4px; width: 48px; height: 50px; padding: 4px 4px 6px; margin: 0; border: 0; background: #f4f4f4; }
.app-logo { width: 40px; height: 40px; }

.titlebar { height: 30px; display: flex; align-items: flex-start; flex: none; }
.qat { margin: 4px 0 0 48px; width: 104px; height: 26px; background: #f6f6f6; display: flex; align-items: center; padding-left: 6px; flex: none; }
.qi { width: 14px; height: 14px; margin-right: 13px; }
.qi-cam { width: 17px; height: 15px; margin: 0 0 0 -2px; }
.title { flex: 1; text-align: center; color: #fff; line-height: 16px; margin-top: 9px; font-size: 13px; letter-spacing: .05px; font-weight: 500; }
.winctl { display: flex; margin-top: 12px; }
.wbtn { width: 48px; display: flex; justify-content: center; }

.tabsbar { height: 24px; background: #b3b3b3; display: flex; align-items: flex-end; flex: none; position: relative; }
.rtab { height: 20px; line-height: 19px; }
.rtab-on { margin-left: 49px; width: 63px; height: 21px; margin-bottom: -1px; text-align: center; background: #fafafa; border: 1px solid #e8e8e8; border-bottom: 0; z-index: 1; }
.rtab-plans { margin-left: 13px; }
.rtab-calc { margin-left: 24px; }
.tabs-right { margin-left: auto; margin-right: 5px; height: 24px; display: flex; align-items: center; gap: 10px; }
.ti { width: 18px; height: 18px; }
.ti-book { width: 19px; }

.ribbon { height: 95px; background: #fafafa; border-top: 1px solid #9c9c9c; border-bottom: 1px solid #8f8f8f; display: flex; flex: none; }
.grp { display: flex; flex-direction: column; border-right: 1px solid #dcdcdc; flex: none; }
.g1 { width: 138px; } .g2 { width: 182px; } .g3 { width: 222px; } .g4 { width: 311px; } .g5 { width: 54px; }
.g6 { width: 328px; } .g7 { width: 60px; } .g8 { width: 45px; } .g9 { width: 154px; border-right: 0; }
.gbody { flex: 1; display: flex; min-height: 0; }
.gfoot { height: 17px; background: #efefef; text-align: center; line-height: 21px; margin-right: 1px; white-space: nowrap; }
.rb { display: flex; flex-direction: column; align-items: center; text-align: center; padding-top: 4px; white-space: nowrap; }
.off { color: #a8a8a8; }
.ri { width: 32px; height: 32px; margin-bottom: 5px; }
.lb { line-height: 13px; display: block; }
.b40 { width: 40px; } .b42 { width: 42px; } .b43 { width: 43px; } .b50 { width: 50px; } .b52 { width: 52px; } .b58 { width: 58px; }
.b60 { width: 60px; } .b61 { width: 61px; } .b72 { width: 72px; } .b76 { width: 76px; } .b94 { width: 94px; }
.move { width: 97px; margin-top: 2px; padding: 6px 0 0 12px; border-right: 1px solid #e0e0e0; display: flex; flex-direction: column; gap: 11px; height: 74px; flex: none; }
.mv { display: flex; align-items: flex-start; gap: 5px; }
.ms { width: 15px; height: 16px; margin-top: -1px; }
.clip { padding-left: 7px; padding-top: 5px; display: flex; flex-direction: column; gap: 9px; }
.cl { display: flex; align-items: center; gap: 4px; height: 16px; }
.cs { width: 15px; height: 16px; }

.workspace { flex: 1; min-height: 0; background: #b3b3b3; padding: 6px 7px 7px 0; display: flex; }
.leftcol { width: 411px; flex: none; display: flex; flex-direction: column; margin-left: 7px; }
.tree { height: 362px; flex: none; background: #e1e1e1; border: 1px solid #fff; padding: 3px 4px 3px 3px; display: flex; overflow: hidden; }
.tree-list { flex: 1; background: #fff; padding: 1px 0 0 2px; overflow: hidden; min-width: 0; }
.row { height: 18px; display: flex; align-items: center; white-space: nowrap; }
.ti16 { width: 16px; height: 16px; margin-left: 1px; margin-right: 7px; }
.r0 .ti16 { margin-right: 6px; }
.tx { padding: 0 2px 0 0; }
.tx-tight { letter-spacing: -.56px; }
.tx-sel { background: #efefef; height: 18px; line-height: 18px; padding: 0 2px; margin-left: -2px; letter-spacing: -.5px; }
.c { position: relative; width: 21px; height: 18px; flex: none; display: flex; align-items: center; justify-content: center; }
.c::before { content: ""; position: absolute; left: 10px; top: 0; bottom: 0; border-left: 1px dotted #777; }
.c-t::after, .c-l::after { content: ""; position: absolute; left: 11px; right: 0; top: 9px; border-top: 1px dotted #777; }
.c-l::before { bottom: 9px; }
.exp { position: relative; z-index: 1; width: 9px; height: 9px; border: 1px solid #8a8a8a; background: #f0f0f0; }
.exp::before { content: ""; position: absolute; left: 1px; right: 1px; top: 3px; height: 1px; background: #222; }
.plus::after { content: ""; position: absolute; top: 1px; bottom: 1px; left: 3px; width: 1px; background: #222; }

.vscroll { display: flex; flex-direction: column; flex: none; background: #f0f0f0; }
.sb-arrow { height: 17px; display: flex; align-items: center; justify-content: center; flex: none; }
.sb-thumb { background: #cdcdcd; display: block; }
.vscroll-tree { width: 15px; }
.vscroll-tree .sb-arrow { height: 18px; }
.vscroll-tree .sb-thumb { flex: 1; margin-bottom: 14px; }

.split-h { height: 8px; flex: none; display: flex; justify-content: center; align-items: center; gap: 2px; }
.split-h span, .split-v span { width: 2px; height: 2px; background: #6d6d6d; display: block; }
.split-v { width: 8px; flex: none; display: flex; flex-direction: column; align-items: center; justify-content: center; gap: 2px; padding-top: 2px; }

.view { flex: 1; min-height: 0; background: #e1e1e1; border: 1px solid #fff; padding: 3px; }
.view-grid { height: 100%; display: grid; grid-template-columns: 24px 24px 1fr; grid-template-rows: 24px 1fr; }
.tool { display: flex; justify-content: center; align-items: center; height: 24px; }
.hscroll { background: #f0f0f0; border-top: 1px solid #fff; display: flex; align-items: center; justify-content: space-between; padding: 0 5px; position: relative; }
.hthumb { width: 17px; height: 22px; background: #c8c8c8; margin-left: 88px; }
.view-left { grid-column: 1; grid-row: 2; display: flex; flex-direction: column; min-height: 0; }
.view-left .tool { flex: none; }
.vscroll-view { flex: 1; width: 23px; min-height: 0; border-left: 1px solid #fff; }
.sb-track { flex: 1; padding-top: 83px; display: block; }
.sb-small { display: block; width: 22px; height: 17px; background: #c8c8c8; }
.canvas { grid-column: 2 / 4; grid-row: 2; background: #bebebe; min-height: 0; overflow: hidden; }
.scene { width: 379px; height: 317px; }
.axis { font: bold 16px "Liberation Sans", sans-serif; letter-spacing: 0; }
.ax-z { fill: #0a7a0a; } .ax-y { fill: #1414e0; } .ax-x { fill: #d81414; }

.rightcol { flex: 1; min-width: 0; display: flex; flex-direction: column; }
.tabstrip { height: 15px; flex: none; }
.ptab { display: block; width: 79px; height: 15px; line-height: 17px; padding-left: 16px; background: #e1e1e1; clip-path: polygon(0 14px, 15px 0, 64px 0, 79px 15px, 0 15px); }
.panel { flex: 1; min-height: 0; background: #e1e1e1; padding: 7px; display: flex; flex-direction: column; }
.box { background: #fafafa; border: 1px solid #707070; flex: none; }
.refbox { height: 39px; display: flex; align-items: center; padding: 1px 9px 0; gap: 8px; margin-bottom: 7px; }
.input { flex: 1; height: 19px; line-height: 17px; background: #fff; border: 1px solid #707070; padding-left: 2px; }
.iconbox { height: 77px; display: flex; justify-content: center; align-items: flex-start; gap: 6px; padding-top: 9px; margin-bottom: 7px; }
.ib { width: 58px; height: 58px; border: 4px solid #d1cfbd; background: #e0e0d5; }
.ib.on { border-color: #7cb9ff; background: #b3d7ff; }
.ib svg { width: 50px; height: 50px; overflow: visible; }
.vav { font: bold 38px "Liberation Sans", sans-serif; text-anchor: middle; fill: #124e85; letter-spacing: 0; }
.subtitle { margin: 3px 0 8px 4px; font-size: 12.5px; line-height: 16px; font-weight: bold; letter-spacing: .1px; }
.lower { flex: 1; min-height: 0; display: flex; }
.accordion { width: 952px; flex: none; display: flex; flex-direction: column; gap: 7px; margin-right: 1px; }
.sec { border: 1px solid #707070; background: #fafafa; display: flex; flex-direction: column; flex: none; }
.s1 { height: 61px; } .s2 { height: 59px; } .s3 { height: 140px; } .s4 { height: 22px; } .s5 { height: 56px; margin-top: -1px; }
.sec-h { height: 22px; flex: none; background: #d3d3d3; border-bottom: 1px solid #707070; display: flex; align-items: flex-start; justify-content: space-between; padding-left: 6px; }
.sec-t, .chk { height: 19px; line-height: 19px; }
.s4 .sec-h { border-bottom: 0; height: 20px; }
.hbtn { width: 19px; height: 19px; border: 2px solid #c8c8c8; display: flex; justify-content: center; align-items: center; background: #fff; outline: 1px solid #b0b0b0; outline-offset: -1px; }
.sec-b { flex: 1; padding: 8px 9px 0; }
.s3 .sec-b { padding-top: 9px; }
.frow { display: flex; align-items: center; gap: 7px; height: 21px; }
.frow2 { margin-top: 5px; }
.lab { flex: none; white-space: nowrap; }
.l105 { width: 105px; } .l115 { width: 115px; letter-spacing: -.34px; } .l106 { width: 106px; letter-spacing: -.62px; } .l116 { width: 116px; letter-spacing: -.36px; }
.sel { height: 21px; line-height: 19px; border: 1px solid #acacac; background: #e1e1e1; padding: 0 1px 0 3px; display: flex; align-items: center; justify-content: space-between; flex: none; white-space: nowrap; }
.w75 { width: 75px; } .w84 { width: 84px; } .w294 { width: 294px; } .w166 { width: 166px; }
.chev { width: 10px; height: 6px; margin: 0 3px 0 4px; }
.focus { font-style: normal; flex: 1; height: 15px; line-height: 15px; outline: 1px dotted #222; outline-offset: -1px; padding-left: 1px; }
.fbtn { width: 18px; height: 24px; border: 1px solid #acacac; background: #e1e1e1; display: flex; justify-content: center; align-items: center; margin-left: -3px; margin-top: -2px; }
.chk { display: flex; align-items: center; gap: 3px; }
.box13 { width: 13px; height: 13px; background: #fff; border: 1px solid #333; display: flex; align-items: center; justify-content: center; }

.vscroll-acc { width: 16px; margin-right: 2px; background: #e9e9e9; }
.vscroll-acc .sb-thumb { height: 306px; background: #cdcdcd; flex: none; }
.vscroll-acc .sb-rest { flex: 1; background: #e1e1e1; }
.sidebtn { width: 42px; border-left: 2px solid #fff; border-right: 2px solid #bcbcbc; padding: 4px 0 0 6px; flex: none; }
.arrowbtn { width: 24px; height: 24px; border: 1px solid #b0b0b0; display: flex; justify-content: center; align-items: center; }
.sidedisk { flex: 1; padding: 7px 0 0 12px; display: flex; flex-direction: column; gap: 16px; }
.dk { width: 17px; height: 17px; }

.mark { position: absolute; pointer-events: none; border-style: solid; border-color: #fe0000; }
.mark-icons { left: 929px; top: 312px; width: 196px; height: 68px; border-width: 4px; }
.mark-sec { left: 435px; top: 634px; width: 956px; height: 146px; border-width: 3px; }
```
